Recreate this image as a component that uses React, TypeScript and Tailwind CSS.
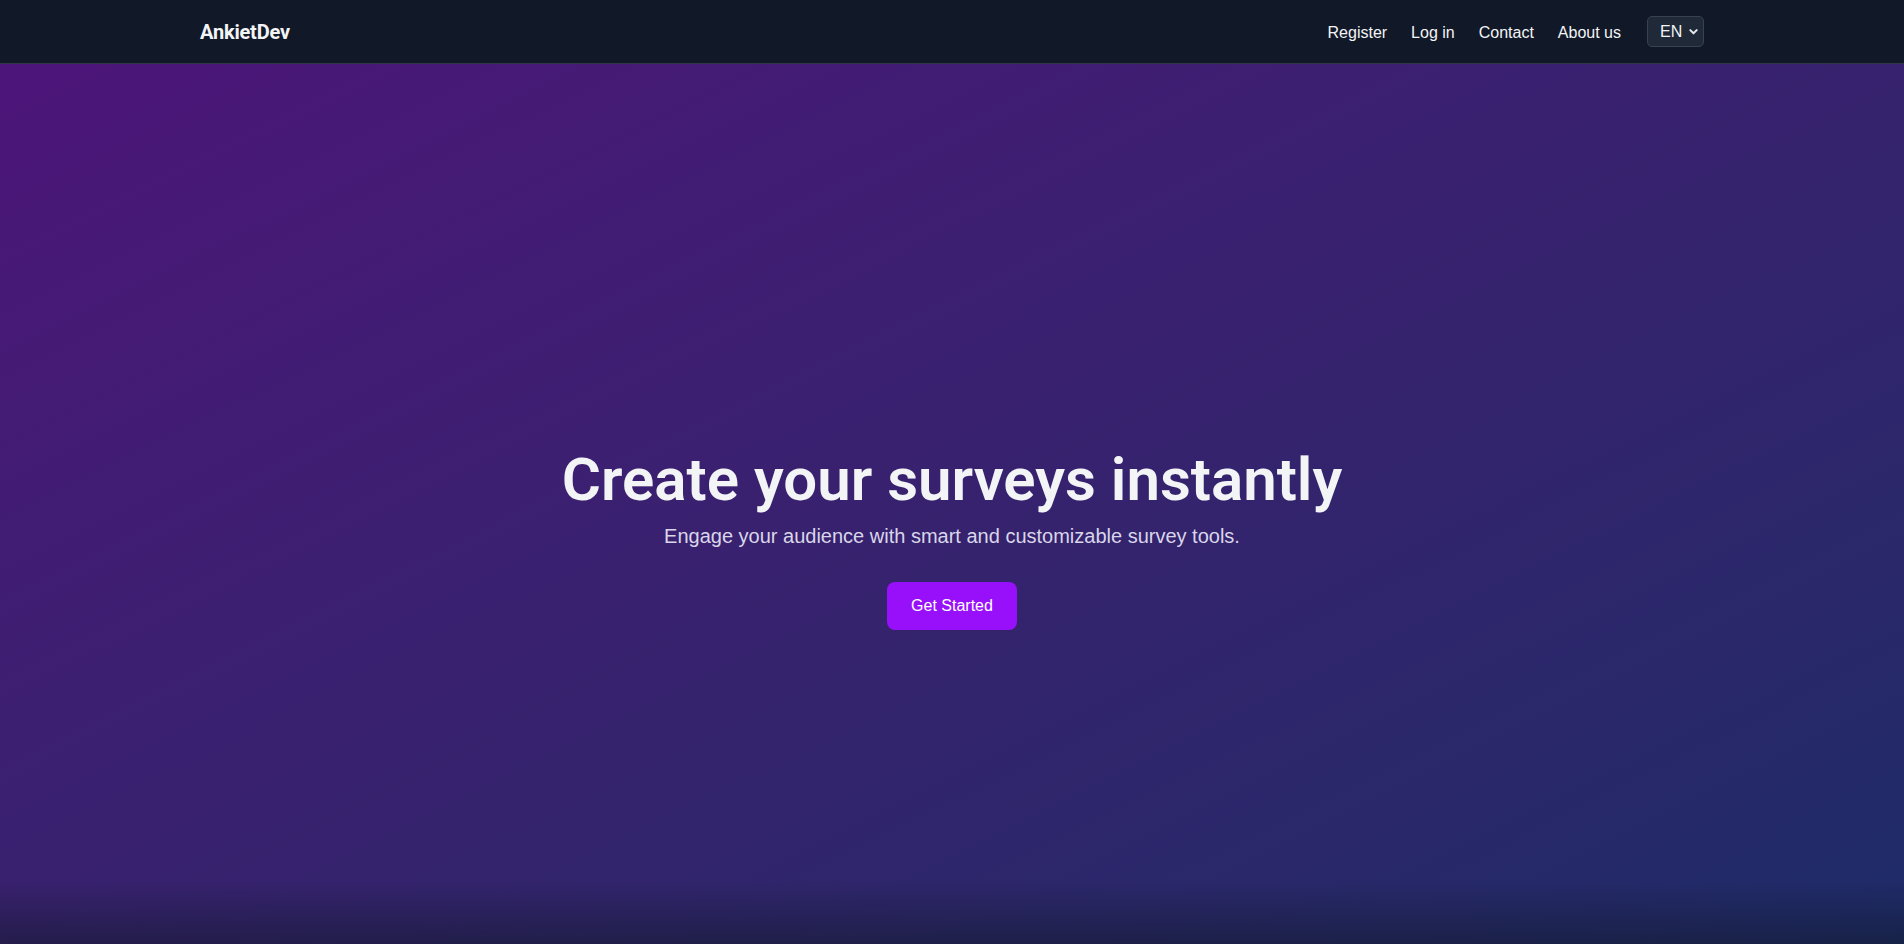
import React from "react";

function Chevron() {
  return (
    <svg width="11" height="11" viewBox="0 0 12 12" fill="none" aria-hidden="true">
      <path d="M2.5 4.5 L6 8 L9.5 4.5" stroke="#e5e7eb" strokeWidth="2.2" strokeLinecap="round" strokeLinejoin="round" />
    </svg>
  );
}

export default function App() {
  return (
    <div className="min-h-screen bg-[#111827] font-['Liberation_Sans',Arial,sans-serif]">
      <header className="h-16 bg-[#111827] border-b border-[#2d3748]">
        <div className="max-w-[1536px] mx-auto px-4 h-full flex items-center justify-between">
          <div className="text-[20px] font-bold text-[#f3f4f6] font-['Roboto',sans-serif] tracking-[-0.2px]">AnkietDev</div>
          <nav className="flex items-center gap-6 text-[16px] text-[#f3f4f6]">
            <a className="cursor-pointer pt-[2px]">Register</a>
            <a className="cursor-pointer pt-[2px]">Log in</a>
            <a className="cursor-pointer pt-[2px]">Contact</a>
            <a className="cursor-pointer pt-[2px]">About us</a>
            <div className="ml-[2px] w-[57px] h-[31px] flex items-center justify-between pl-3 pr-[4px] bg-[#1f2937] border border-[#374151] rounded-[5px] text-[16px] text-[#f3f4f6]">
              <span className="pt-[1px]">EN</span>
              <Chevron />
            </div>
          </nav>
        </div>
      </header>
      <section className="relative min-h-screen bg-linear-to-br from-[#4c1579] via-[#36226e] to-[#1b2c68] flex items-center justify-center overflow-hidden">
        <div className="relative z-10 flex flex-col items-center text-center pt-[8px]">
          <h1 className="text-[60px] leading-none font-semibold text-[#f3f4f6] font-['Roboto',sans-serif] tracking-[0px]">
            Create your surveys instantly
          </h1>
          <p className="mt-3 text-[20px] leading-7 text-[#d9d6ea]">
            Engage your audience with smart and customizable survey tools.
          </p>
          <button className="mt-8 h-12 px-6 rounded-lg bg-[#9810fa] text-white text-[16px]">
            Get Started
          </button>
        </div>
        <div className="absolute bottom-0 left-0 right-0 h-32 bg-linear-to-t from-[#111827] to-transparent" />
      </section>
    </div>
  );
}
